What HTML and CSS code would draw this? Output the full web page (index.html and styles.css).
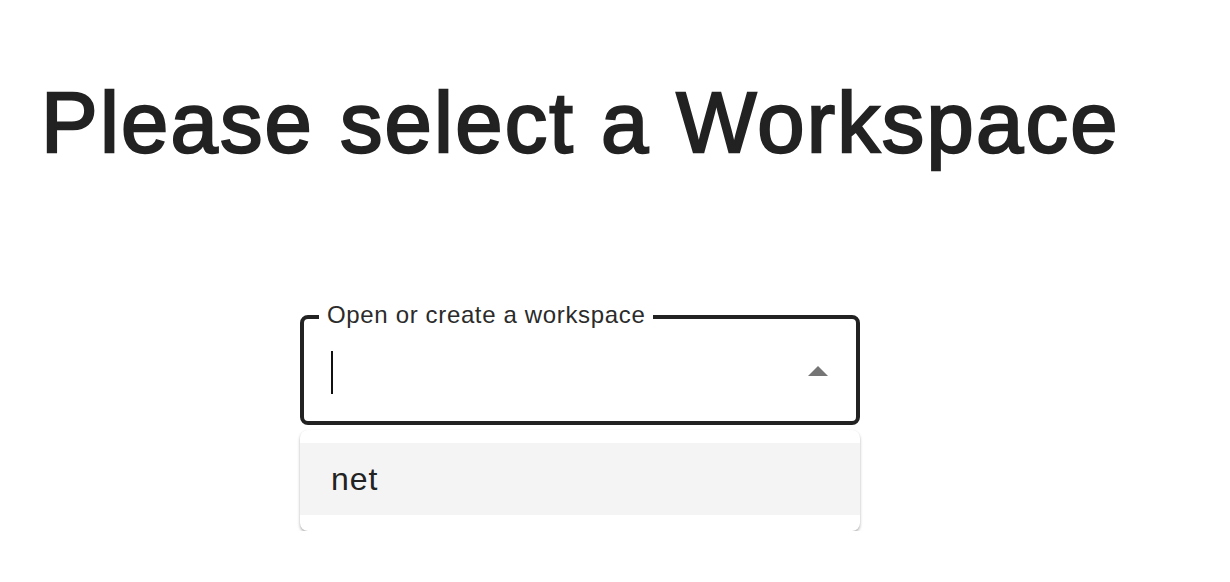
FILE: index.html
```html
<!DOCTYPE html>
<html lang="en">
<head>
<meta charset="utf-8">
<title>Select Workspace</title>
<link rel="stylesheet" href="styles.css">
</head>
<body>
  <h1 class="title">Please select a Workspace</h1>
  <div class="picker">
    <fieldset class="field">
      <legend class="field-label">Open or create a workspace</legend>
      <div class="field-row">
        <span class="caret"></span>
        <span class="spacer"></span>
        <svg class="arrow" width="48" height="48" viewBox="0 0 24 24" aria-hidden="true"><path d="M7 14l5-5 5 5z" fill="#757575"/></svg>
      </div>
    </fieldset>
    <ul class="menu">
      <li class="option">net</li>
    </ul>
  </div>
</body>
</html>
```

FILE: styles.css
```css
html, body {
  margin: 0;
  background: #ffffff;
}

body {
  font-family: "Liberation Sans", Arial, sans-serif;
  color: #222222;
}

.title {
  margin: 74px 0 0;
  padding-left: 41px;
  font-size: 85px;
  line-height: 98px;
  font-weight: 400;
  letter-spacing: 2.2px;
  -webkit-text-stroke: 2.3px #222222;
  color: #222222;
}

.picker {
  width: 560px;
  margin: 131px 0 0 300px;
}

.field {
  margin: 0;
  padding: 0 14px 8px 15px;
  border: 4px solid #222222;
  border-radius: 8px;
  min-width: 0;
}

.field-label {
  padding: 0 8px 4px;
  font-size: 24px;
  line-height: 24px;
  letter-spacing: 0.65px;
  color: #2b2b2b;
}

.field-row {
  display: flex;
  align-items: center;
  height: 82px;
  padding-left: 12px;
}

.caret {
  width: 2px;
  height: 43px;
  background: #111111;
}

.spacer {
  flex: 1;
}

.arrow {
  display: block;
}

.menu {
  list-style: none;
  margin: 5px 0 0;
  padding: 13px 0 16px;
  background: #ffffff;
  border-radius: 8px;
  box-shadow: 0 2px 3px rgba(0, 0, 0, 0.3), 0 0 1px rgba(0, 0, 0, 0.06);
}

.option {
  height: 72px;
  display: flex;
  align-items: center;
  padding-left: 31px;
  background: #f4f4f4;
  font-size: 32px;
  letter-spacing: 1px;
  color: #222222;
}
```
